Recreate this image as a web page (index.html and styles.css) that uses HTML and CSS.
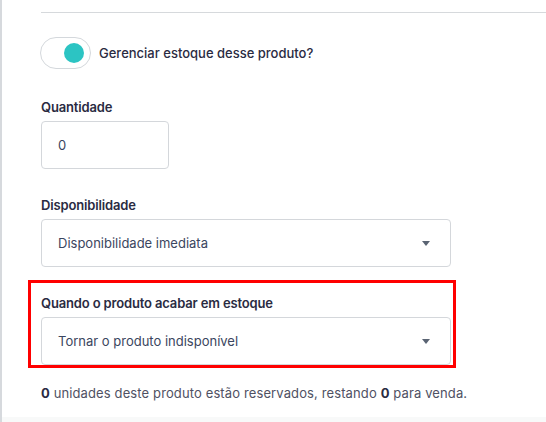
FILE: index.html
```html
<!DOCTYPE html>
<html lang="pt">
<head>
<meta charset="utf-8">
<link rel="stylesheet" href="styles.css">
</head>
<body>
<div class="page">
  <div class="panel">
    <hr class="divider">
    <div class="toggle-row">
      <span class="toggle"><span class="knob"></span></span>
      <span class="toggle-label">Gerenciar estoque desse produto?</span>
    </div>
    <div class="field field-qty">
      <label class="label">Quantidade</label>
      <div class="input qty">0</div>
    </div>
    <div class="field field-disp">
      <label class="label">Disponibilidade</label>
      <div class="input select">
        <span>Disponibilidade imediata</span>
        <span class="caret"></span>
      </div>
    </div>
    <div class="field field-out">
      <label class="label">Quando o produto acabar em estoque</label>
      <div class="input select">
        <span>Tornar o produto indisponível</span>
        <span class="caret"></span>
      </div>
    </div>
    <p class="note"><b>0</b> unidades deste produto estão reservados, restando <b>0</b> para venda.</p>
    <div class="highlight"></div>
  </div>
  <div class="footer-area"></div>
</div>
</body>
</html>
```
FILE: styles.css
```css
* { box-sizing: border-box; }
html, body { margin: 0; padding: 0; background: #fff; }
body {
  font-family: Inter, "Noto Sans", "Liberation Sans", sans-serif;
  font-size: 13px;
  color: #2f3048;
}
.page {
  width: 546px;
  height: 422px;
  border-left: 2px solid #d6d9dd;
  display: flex;
  flex-direction: column;
  overflow: hidden;
}
.panel {
  position: relative;
  padding: 12px 0 0 38px;
  flex: 0 0 auto;
}
.divider {
  margin: 0 0 0 1px;
  border: 0;
  border-top: 1px solid #d6d9dc;
  height: 0;
}
.toggle-row {
  margin-top: 24px;
  display: flex;
  align-items: center;
  gap: 8px;
}
.toggle {
  width: 51px;
  height: 32px;
  border: 1px solid #d4d8dc;
  border-radius: 16px;
  display: flex;
  align-items: center;
  justify-content: flex-end;
  padding-right: 6px;
  background: #fff;
}
.knob {
  width: 20px;
  height: 20px;
  border-radius: 50%;
  background: #2cc4c3;
}
.toggle-label {
  font-weight: 500;
  color: #2a2b42;
}
.field { display: flex; flex-direction: column; }
.field-qty { margin-top: 28px; }
.field-disp { margin-top: 26px; }
.field-out { margin-top: 26px; }
.label {
  font-weight: 600;
  line-height: 20px;
  margin-bottom: 4px;
  margin-left: 1px;
  color: #2a2b42;
  letter-spacing: -0.15px;
}
.input {
  height: 48px;
  border: 1px solid #d4d7db;
  border-radius: 4px;
  display: flex;
  align-items: center;
  padding: 0 16px;
  color: #3b4660;
  margin-left: 1px;
  background: #fff;
}
.qty { width: 128px; }
.select {
  width: 410px;
  justify-content: space-between;
  padding-right: 20px;
}
.caret {
  width: 0;
  height: 0;
  border-left: 4.5px solid transparent;
  border-right: 4.5px solid transparent;
  border-top: 5px solid #5a6473;
  margin-top: 1px;
}
.note {
  margin: 18px 0 0 1px;
  line-height: 20px;
  color: #4f5163;
  letter-spacing: 0.12px;
}
.note b { color: #2a2b42; font-weight: 700; }
.highlight {
  position: absolute;
  left: 26px;
  top: 280px;
  width: 428px;
  height: 88px;
  border: 3px solid #ff0000;
  pointer-events: none;
}
.footer-area {
  flex: 1 1 auto;
  margin-top: 14px;
  background: #f8f9f9;
}
```
